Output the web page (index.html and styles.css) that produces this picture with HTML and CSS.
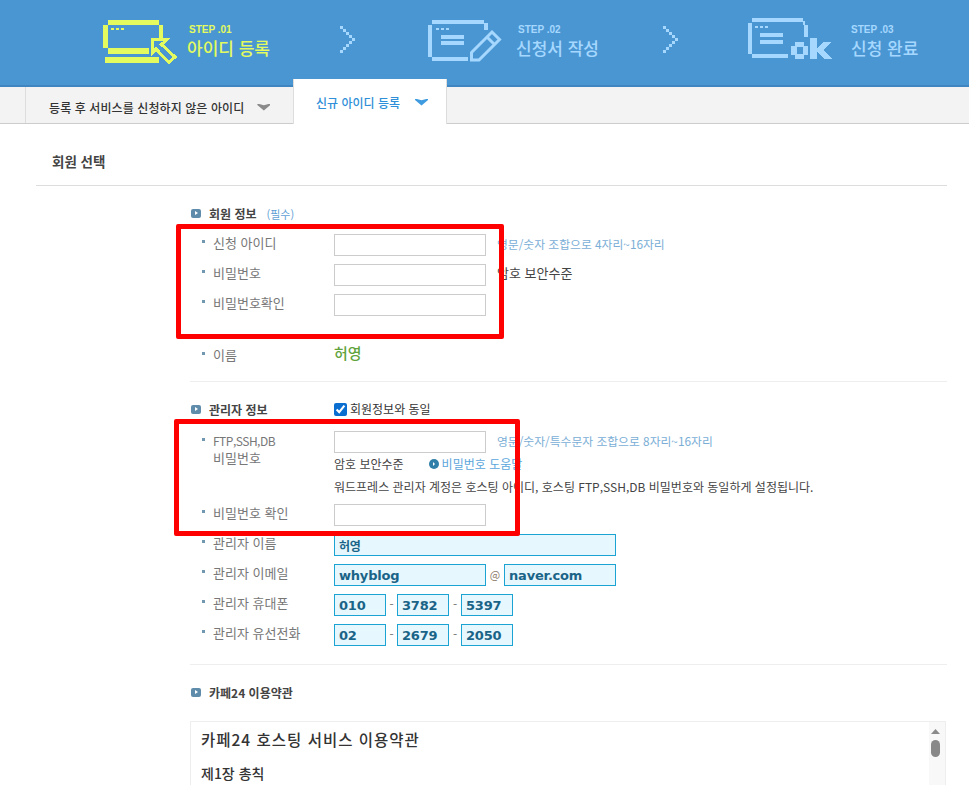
FILE: index.html
```html
<!DOCTYPE html>
<html lang="ko">
<head>
<meta charset="utf-8">
<title>신규 아이디 등록</title>
<link rel="stylesheet" href="styles.css">
</head>
<body>
<header class="steps">
  <div class="step step-one">
    <svg class="icon" width="74" height="46" viewBox="0 0 74 46" shape-rendering="crispEdges" fill="#e3fb5e">
      <path d="M5 2h51v5H5zM56 7h4v13h-4zM0 7h5v23H0zM5 30h41v6H5zM2 39h54v6H2zM8 10h3v2H8zM13 10h3v2h-3zM18 10h3v2h-3z"/>
      <path fill="#4a96d2" stroke="#e3fb5e" stroke-width="3" stroke-linejoin="miter" d="M49.5 21.5H64L58.500 26.500 72 39 66 44.500 53 31 49.500 35Z"/>
    </svg>
    <div class="step-text"><span class="step-no">STEP .01</span><span class="step-name">아이디 등록</span></div>
  </div>
  <svg class="chev" width="16" height="28" viewBox="0 0 16 28" fill="#a6d8ff"><path d="M0 0h3v3H0zM3 3h3v3H3zM6 6h3v3H6zM9 9h3v3H9zM12 12h3v3h-3zM9 15h3v3H9zM6 18h3v3H6zM3 21h3v3H3zM0 24h3v3H0z"/></svg>
  <div class="step step-two">
    <svg class="icon" width="74" height="44" viewBox="0 0 74 44" fill="#a6d8ff">
      <path shape-rendering="crispEdges" d="M4 2h52v4H4zM56 5h4v7h-4zM0 7h4v32H0zM4 39h36v4H4zM8 10h3v2H8zM13 10h3v2h-3zM18 10h3v2h-3zM13 17h23v4H13zM13 23h23v4H13z"/>
      <path fill="none" stroke="#a6d8ff" stroke-width="3" d="M43.500 34.500 64 14 71.500 21.500 51 42H43.500ZM59 19 66.500 26.500"/>
    </svg>
    <div class="step-text"><span class="step-no">STEP .02</span><span class="step-name">신청서 작성</span></div>
  </div>
  <svg class="chev" width="16" height="28" viewBox="0 0 16 28" fill="#a6d8ff"><path d="M0 0h3v3H0zM3 3h3v3H3zM6 6h3v3H6zM9 9h3v3H9zM12 12h3v3h-3zM9 15h3v3H9zM6 18h3v3H6zM3 21h3v3H3zM0 24h3v3H0z"/></svg>
  <div class="step step-three">
    <svg class="icon" width="87" height="44" viewBox="0 0 87 44" shape-rendering="crispEdges" fill="#a6d8ff">
      <path d="M5 0h51v4H5zM56 3h2v4h-2zM57 7h4v12h-4zM1 5h4v31H1zM5 36h36v4H5zM8 8h3v2H8zM13 8h3v2h-3zM18 8h3v2h-3zM13 15h23v4H13zM13 22h23v4H13z"/>
      <path fill-rule="evenodd" d="M48 24h9v4h4v9h-4v4h-9v-4h-4v-9h4zM50 29v7h6v-7z"/>
      <path d="M63 20h7v11l6-7h8l-8 8 9 9h-8l-7-7v7h-7z"/>
    </svg>
    <div class="step-text"><span class="step-no">STEP .03</span><span class="step-name">신청 완료</span></div>
  </div>
</header>

<nav class="tabs">
  <a class="tab">등록 후 서비스를 신청하지 않은 아이디<span class="tri tri-grey"></span></a>
  <a class="tab tab-active">신규 아이디 등록<span class="tri tri-blue"></span></a>
</nav>

<main class="content">
  <h2 class="page-title">회원 선택</h2>
  <div class="form">
    <section class="group">
      <h3 class="head"><span class="head-ico"></span>회원 정보 <small class="req">(필수)</small></h3>
      <div class="row"><span class="lbl">신청 아이디</span><input class="field" type="text"><span class="hint">영문/숫자 조합으로 4자리~16자리</span></div>
      <div class="row"><span class="lbl">비밀번호</span><input class="field" type="text"><span class="plain hint-gap">암호 보안수준</span></div>
      <div class="row"><span class="lbl">비밀번호확인</span><input class="field" type="text"></div>
      <div class="row row-name"><span class="lbl">이름</span><strong class="name">허영</strong></div>
    </section>

    <section class="group group-admin">
      <h3 class="head head-check"><span class="head-title"><span class="head-ico"></span>관리자 정보</span><label class="same"><input type="checkbox" checked>회원정보와 동일</label></h3>
      <div class="row row-top">
        <span class="lbl lbl-two"><span class="latin">FTP,SSH,DB</span><br>비밀번호</span>
        <div class="col">
          <div class="inline"><input class="field" type="text"><span class="hint">영문/숫자/특수문자 조합으로 8자리~16자리</span></div>
          <div class="note note-pw"><span class="plain">암호 보안수준</span><a class="help"><span class="help-ico"></span>비밀번호 도움말</a></div>
          <div class="note note-wp plain">워드프레스 관리자 계정은 호스팅 아이디, 호스팅 FTP,SSH,DB 비밀번호와 동일하게 설정됩니다.</div>
        </div>
      </div>
      <div class="row"><span class="lbl">비밀번호 확인</span><input class="field" type="text"></div>
      <div class="row"><span class="lbl">관리자 이름</span><input class="field fill w-full" type="text" value="허영"></div>
      <div class="row"><span class="lbl">관리자 이메일</span><input class="field fill" type="text" value="whyblog"><span class="at">@</span><input class="field fill w-mail" type="text" value="naver.com"></div>
      <div class="row"><span class="lbl">관리자 휴대폰</span><input class="field fill w-tel" type="text" value="010"><span class="dash">-</span><input class="field fill w-tel" type="text" value="3782"><span class="dash dash-b">-</span><input class="field fill w-tel" type="text" value="5397"></div>
      <div class="row"><span class="lbl">관리자 유선전화</span><input class="field fill w-tel" type="text" value="02"><span class="dash">-</span><input class="field fill w-tel" type="text" value="2679"><span class="dash dash-b">-</span><input class="field fill w-tel" type="text" value="2050"></div>
    </section>

    <section class="terms">
      <h3 class="head"><span class="head-ico"></span>카페24 이용약관</h3>
      <div class="terms-box">
        <div class="terms-text">
          <h4 class="terms-title">카페24 호스팅 서비스 이용약관</h4>
          <p class="terms-chapter">제1장 총칙</p>
        </div>
        <div class="scrollbar"><span class="sb-up"></span><span class="sb-thumb"></span></div>
      </div>
    </section>
  </div>
</main>

<div class="redbox redbox-one"></div>
<div class="redbox redbox-two"></div>
</body>
</html>
```
FILE: styles.css
```css
* { box-sizing: border-box; }
html, body { margin: 0; height: 785px; overflow: hidden; background: #fff; }
body { position: relative; font-family: "Noto Sans CJK KR", "Noto Sans", sans-serif; font-size: 12px; color: #444; }

.steps { height: 87px; background: #4a96d2; border-bottom: 2px solid #3f86c0; padding-left: 103px; display: flex; align-items: flex-start; color: #a6d8ff; }
.step { display: flex; flex: none; padding-top: 18px; }
.step-one { width: 237px; color: #e3fb5e; }
.step-two { width: 235px; }
.step-three { width: auto; }
.step-one .step-text { margin-left: 10px; }
.step-two .step-text { margin-left: 14px; }
.step-three .step-text { margin-left: 17px; }
.step-text { display: flex; flex-direction: column; padding-top: 5px; }
.step-no { font: bold 10px/14px "Liberation Sans", sans-serif; padding-left: 2px; }
.step-three .step-no { padding-left: 0; }
.step-name { font-size: 17px; font-weight: 500; line-height: 20px; margin-top: 1px; }
.chev { flex: none; margin-top: 26px; }
.step-one + .chev { margin-right: 72px; }
.step-two + .chev { margin-right: 68px; }

.tabs { height: 37px; background: #f3f3f3; border-bottom: 1px solid #ccc; padding-left: 25px; display: flex; align-items: flex-start; }
.tab { display: flex; align-items: center; height: 36px; flex: none; }
.tab:first-child { width: 268px; border-left: 1px solid #ddd; padding-left: 23px; font-weight: 500; color: #333; padding-top: 4px; letter-spacing: 0.09px; }
.tab-active { width: 154px; height: 45px; margin-top: -8px; padding: 2px 0 0 22px; background: #fff; border: 1px solid #ddd; border-width: 0 1px 0 1px; color: #2f8fd8; font-weight: 500; position: relative; z-index: 1; }
.tri { display: block; width: 13px; height: 7px; clip-path: polygon(0 0, 50% 25%, 100% 0, 100% 20%, 50% 100%, 0 20%); margin-left: 13px; }
.tri-grey { background: #8a8a8a; }
.tri-blue { background: #3f9be0; margin-left: 15px; margin-top: -1px; }

.content { padding: 0 22px 0 36px; }
.page-title { margin: 0; height: 62px; padding: 28px 0 0 16px; border-bottom: 1px solid #ddd; font-size: 13.5px; line-height: 18px; font-weight: 700; color: #444; }
.form { padding-left: 154px; }

.head { margin: 0; height: 20px; padding-left: 0; display: flex; align-items: center; font-size: 12px; font-weight: 700; color: #444; line-height: 20px; }
.head-ico { width: 10px; height: 9px; border-radius: 2px; background: #5f8cab; margin-right: 8px; margin-left: 1px; margin-top: -1px; flex: none; position: relative; }
.head-ico::after { content: ""; position: absolute; left: 4px; top: 2px; border-style: solid; border-width: 2.5px 0 2.5px 3px; border-color: transparent transparent transparent #fff; }
.req { font-size: 11px; font-weight: 400; color: #5f9fd6; margin-left: 10px; }
.group { padding-top: 18px; padding-bottom: 11px; border-bottom: 1px solid #eee; }
.group .head { margin-bottom: 6px; }
.group-admin { padding-top: 18px; padding-bottom: 14px; }
.group-admin .head { margin-bottom: 7px; }
.head-check .head-title { width: 144px; display: flex; align-items: center; }
.same { display: flex; align-items: center; font-weight: 400; color: #333; margin-top: -2px; }
.same input { width: 13px; height: 13px; margin: 0 3px 0 0; accent-color: #0a6ed1; }

.row { height: 30px; display: flex; align-items: center; }
.lbl { width: 144px; flex: none; padding-left: 23px; color: #777; position: relative; margin-top: -5px; font-size: 13px; }
.lbl::before { content: ""; position: absolute; left: 12px; top: 7px; width: 3px; height: 3px; background: #7297b0; }
.row-name { margin-top: 20px; }
.row-name .lbl { margin-top: -1px; }
.name { font-size: 15px; font-weight: 500; color: #5fa33c; margin-top: -6px; }

.field { width: 152px; height: 22px; flex: none; border: 1px solid #ccc; background: #fff; padding: 1px 0 0 4px; margin: 0; font: bold 13px "DejaVu Sans", sans-serif; letter-spacing: -0.2px; color: #1a6488; border-radius: 0; outline: 0; }
.fill { background: #e6f7fd; border-color: #1ba3d4; }
.w-full { width: 282px; font-family: "Noto Sans CJK KR", sans-serif; font-size: 12px; }
.w-mail { width: 112px; }
.w-tel { width: 52px; }
.hint { color: #7aaed6; margin-left: 11px; font-size: 11.8px; margin-top: -4px; }
.plain { color: #444; }
.hint-gap { margin-left: 11px; margin-top: -5px; font-size: 13px; }
.at { width: 18px; text-align: center; font-size: 11px; color: #8a7a6a; margin-top: -3px; }
.dash { width: 11px; text-align: center; color: #777; margin-top: -3px; }
.dash-b { width: 12px; }

.row-top { height: auto; align-items: flex-start; padding-top: 4px; }
.lbl-two { margin-top: 0; line-height: 17px; padding-top: 1px; }
.latin { letter-spacing: -0.5px; font-size: 12px; }
.lbl-two::before { top: 7px; }
.inline { display: flex; align-items: center; }
.col { display: flex; flex-direction: column; }
.note { font-size: 12px; line-height: 20px; height: 20px; white-space: nowrap; }
.note-pw { margin-top: 1px; display: flex; align-items: center; }
.note-wp { margin-top: 3px; margin-bottom: 3px; }
.help { display: flex; align-items: center; color: #5ba6dc; margin-left: 25px; }
.help-ico { width: 10px; height: 10px; border-radius: 50%; background: #2f7fa8; margin-right: 3px; position: relative; }
.help-ico::after { content: ""; position: absolute; left: 4px; top: 3px; border-style: solid; border-width: 2px 0 2px 2.5px; border-color: transparent transparent transparent #fff; }

.terms { padding-top: 18px; }
.terms-box { margin-top: 18px; height: 200px; margin-right: 1px; border: 1px solid #eee; display: flex; }
.terms-text { flex: 1; padding: 6px 0 0 10px; }
.terms-title { margin: 0; font-size: 15.5px; letter-spacing: 1px; line-height: 22px; font-weight: 500; color: #333; }
.terms-chapter { margin: 14px 0 0; font-size: 14px; line-height: 18px; font-weight: 500; color: #333; }
.scrollbar { width: 16px; background: #f8f8f8; }
.sb-up { display: block; width: 9px; height: 5px; margin: 7px 0 0 2px; background: #8a8a8a; clip-path: polygon(50% 0, 100% 100%, 0 100%); }
.sb-thumb { display: block; width: 9px; height: 17px; margin: 6px 0 0 2px; border-radius: 5px; background: #888; }

.redbox { position: absolute; border: 5px solid #f00; border-radius: 2px; pointer-events: none; z-index: 2; }
.redbox-one { left: 176px; top: 224px; width: 328px; height: 115px; }
.redbox-two { left: 174px; top: 419px; width: 346px; height: 117px; }
```
